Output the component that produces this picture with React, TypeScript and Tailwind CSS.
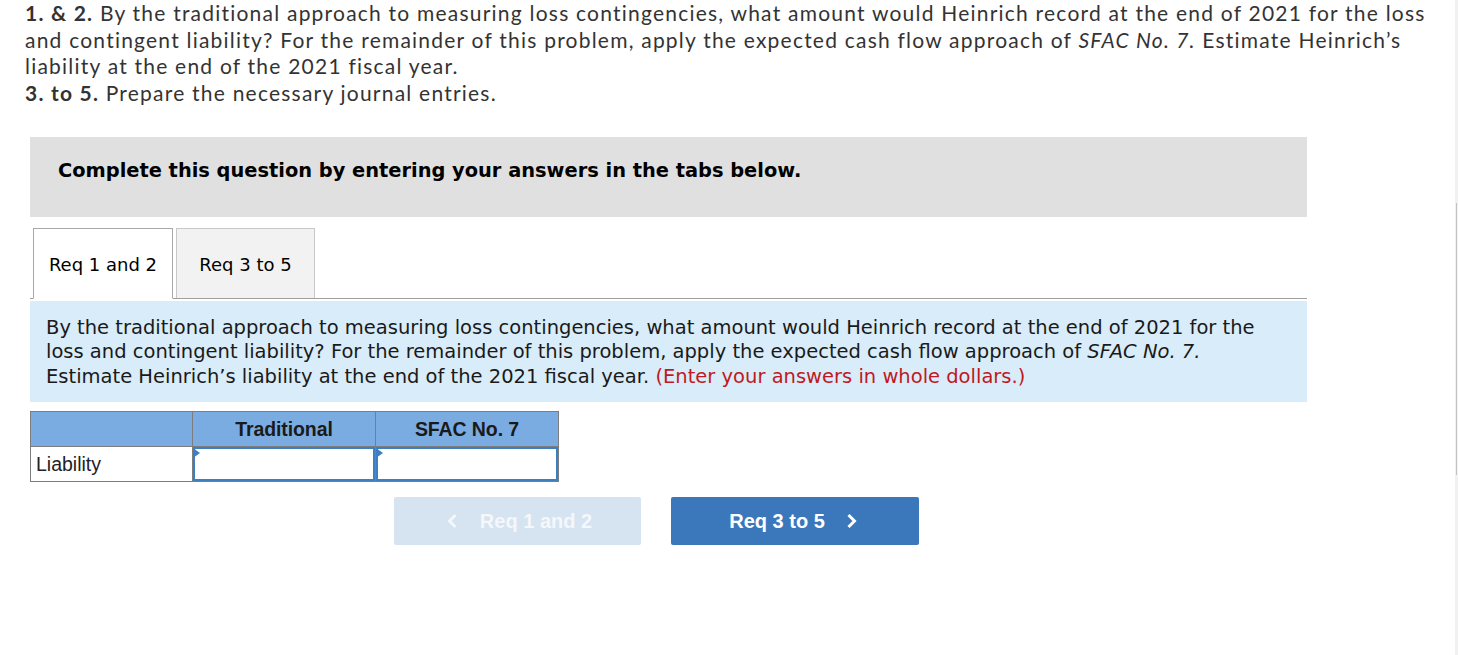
import React from "react";

function InputCell() {
  return (
    <div className="relative h-[34px] border-2 border-[#3c7fc3] bg-white">
      <svg className="absolute -left-[2px] -top-[1px]" width="7" height="10" viewBox="0 0 7 10">
        <path d="M0 0 L7 5 L0 10 Z" fill="#3c7fc3" />
      </svg>
    </div>
  );
}

export default function App() {
  return (
    <div className="flex w-[1458px] h-[655px] bg-white overflow-hidden">
      <div className="flex-1 min-w-0">
        <div className="pl-[25px] text-[21px] leading-[26.7px] text-[#333] tracking-[1.22px] font-['Lato',sans-serif] whitespace-nowrap">
          <p>
            <b className="font-bold">1. &amp; 2.</b> By the traditional approach to measuring loss contingencies, what amount would Heinrich record at the end of 2021 for the loss
            <br />
            and contingent liability? For the remainder of this problem, apply the expected cash flow approach of <i>SFAC No. 7.</i> Estimate Heinrich’s
            <br />
            liability at the end of the 2021 fiscal year.
          </p>
          <p>
            <b className="font-bold">3. to 5.</b> Prepare the necessary journal entries.
          </p>
        </div>

        <div className="ml-[30px] w-[1277px] mt-[30px]">
          <div className="h-[80px] bg-[#e0e0e0] flex items-center pl-[28px] pb-[12px] font-['DejaVu_Sans',sans-serif] text-[19.4px] font-bold text-black">
            Complete this question by entering your answers in the tabs below.
          </div>

          <div className="mt-[12px] flex items-end h-[70px] border-b border-[#a0a0a0] pl-[3px]">
            <div className="w-[140px] h-[71px] -mb-px bg-white border border-[#a8a8a8] border-b-white flex items-center justify-center pt-[2px] font-['DejaVu_Sans',sans-serif] text-[18px] text-black">
              Req 1 and 2
            </div>
            <div className="ml-[3px] w-[139px] h-[70px] bg-[#f2f2f2] border border-[#c8c8c8] border-b-0 flex items-center justify-center pt-[2px] font-['DejaVu_Sans',sans-serif] text-[18px] text-black">
              Req 3 to 5
            </div>
          </div>

          <div className="mt-[2px] bg-[#d9ecf9] px-[16px] pt-[15px] pb-[13px] font-['DejaVu_Sans',sans-serif] text-[19.5px] leading-[24.5px] text-[#1a1a1a] whitespace-nowrap">
            By the traditional approach to measuring loss contingencies, what amount would Heinrich record at the end of 2021 for the
            <br />
            loss and contingent liability? For the remainder of this problem, apply the expected cash flow approach of <i>SFAC No. 7.</i>
            <br />
            Estimate Heinrich’s liability at the end of the 2021 fiscal year.{" "}
            <span className="text-[#c0191f]">(Enter your answers in whole dollars.)</span>
          </div>

          <table className="mt-[9px] border-collapse font-['Liberation_Sans',sans-serif] text-[19.5px]">
            <tbody>
              <tr className="h-[35px] bg-[#7aace2]">
                <td className="w-[162px] border border-[#7d7d7d] p-0"></td>
                <td className="w-[183px] border border-[#7d7d7d] p-0 text-center font-bold text-[#1a1a1a] tracking-[-0.1px]">Traditional</td>
                <td className="w-[183px] border border-[#7d7d7d] p-0 text-center font-bold text-[#1a1a1a] tracking-[-0.1px]">SFAC No. 7</td>
              </tr>
              <tr className="h-[35px]">
                <td className="border border-[#7d7d7d] px-[5px] py-0 text-[#222]">Liability</td>
                <td className="border border-[#7d7d7d] p-0">
                  <InputCell />
                </td>
                <td className="border border-[#7d7d7d] p-0">
                  <InputCell />
                </td>
              </tr>
            </tbody>
          </table>

          <div className="mt-[15px] ml-[364px] flex gap-[30px] font-['Liberation_Sans',sans-serif] text-[20px] font-bold">
            <div className="w-[247px] h-[48px] rounded-[2px] bg-[#d6e3f1] flex items-center justify-center gap-[22px] pl-[4px]">
              <svg width="11" height="16" viewBox="0 0 11 16">
                <path d="M8.5 2 L2.5 8 L8.5 14" fill="none" stroke="#f4f7fb" strokeWidth="3" />
              </svg>
              <span className="text-[#f4f7fb]">Req 1 and 2</span>
            </div>
            <div className="w-[248px] h-[48px] rounded-[2px] bg-[#3a77bb] text-white flex items-center justify-center gap-[21px] pr-[4px]">
              <span>Req 3 to 5</span>
              <svg width="11" height="16" viewBox="0 0 11 16">
                <path d="M2.5 2 L8.5 8 L2.5 14" fill="none" stroke="white" strokeWidth="3" />
              </svg>
            </div>
          </div>
        </div>
      </div>
      <div className="w-[3px] bg-[#f1f1f1] flex flex-col">
        <div className="h-[203px]" />
        <div className="h-[272px] ml-[1px] w-[1px] bg-[#c4c4c4]" />
      </div>
    </div>
  );
}
